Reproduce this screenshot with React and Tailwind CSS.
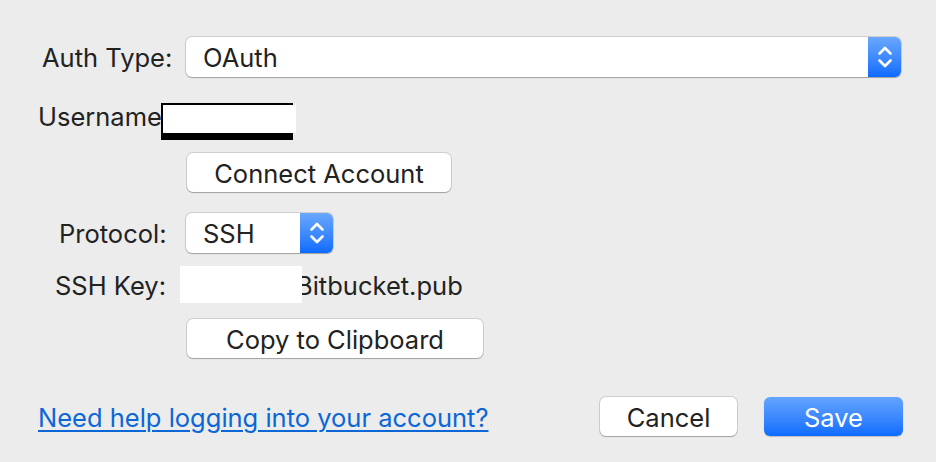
import React from "react";

const font = { fontFamily: "Inter, 'Liberation Sans', sans-serif" };

function Stepper() {
  return (
    <div className="w-[33px] h-full rounded-r-[6px] bg-gradient-to-b from-[#69a7fc] to-[#0a6bff] flex items-center justify-center">
      <svg width="18" height="26" viewBox="0 0 18 26" fill="none" stroke="white" strokeWidth="2.6" strokeLinecap="round" strokeLinejoin="round">
        <path d="M3.5 9.5 L9 4 L14.5 9.5" />
        <path d="M3.5 16.5 L9 22 L14.5 16.5" />
      </svg>
    </div>
  );
}

function Select({ value, width }) {
  return (
    <div
      className={`flex h-[40px] rounded-[6px] bg-white shadow-[0_0_0_1px_rgba(0,0,0,0.12),0_1px_1px_rgba(0,0,0,0.22)] ${width}`}
    >
      <div className="flex-1 flex items-center pl-[17px] pt-[3px] text-[25.5px] text-[#222]">{value}</div>
      <Stepper />
    </div>
  );
}

function Button({ children, className = "" }) {
  return (
    <div
      className={`h-[39px] rounded-[6px] bg-white shadow-[0_0_0_1px_rgba(0,0,0,0.12),0_1px_1px_rgba(0,0,0,0.22)] flex items-center justify-center pt-[3px] text-[25.5px] text-[#222] ${className}`}
    >
      {children}
    </div>
  );
}

export default function App() {
  return (
    <div className="w-[936px] h-[462px] bg-[#ececec] overflow-hidden text-[#222] text-[25.5px]" style={font}>
      {/* Row 1 */}
      <div className="flex items-center h-[40px] mt-[37px]">
        <div className="ml-[42px] w-[144px] pt-[3px]">Auth Type:</div>
        <Select value="OAuth" width="w-[715px]" />
      </div>
      {/* Row 2 */}
      <div className="flex items-center h-[37px] mt-[26px]">
        <div className="ml-[38px] w-[123px] -mt-[8px]">Username</div>
        <div className="flex">
          <div className="w-[132px] h-[37px] bg-black pl-[2px] pt-[2px] pb-[7px]">
            <div className="w-[133px] h-full bg-white"></div>
          </div>
        </div>
      </div>
      {/* Row 3 */}
      <div className="flex items-center h-[39px] mt-[13px]">
        <Button className="ml-[187px] w-[264px]">Connect Account</Button>
      </div>
      {/* Row 4 */}
      <div className="flex items-center h-[39px] mt-[21px]">
        <div className="ml-[59px] w-[127px] pt-[3px]">Protocol:</div>
        <Select value="SSH" width="w-[147px]" />
      </div>
      {/* Row 5 */}
      <div className="flex items-center h-[37px] mt-[14px]">
        <div className="ml-[55px] w-[125px] pt-[3px]">SSH Key:</div>
        <div className="relative z-10 w-[122px] h-[37px] bg-white"></div>
        <div className="-ml-[6px] pt-[3px]">Bitbucket.pub</div>
      </div>
      {/* Row 6 */}
      <div className="flex items-center h-[39px] mt-[16px]">
        <Button className="ml-[187px] w-[296px]">Copy to Clipboard</Button>
      </div>
      {/* Footer */}
      <div className="flex items-center h-[39px] mt-[39px] pl-[38px] pr-[33px]">
        <div className="pt-[3px] text-[#0b66d6] underline underline-offset-[3px] decoration-[2px]">
          Need help logging into your account?
        </div>
        <div className="flex-1"></div>
        <Button className="w-[137px]">Cancel</Button>
        <div className="ml-[27px] w-[139px] h-[39px] pt-[3px] rounded-[6px] bg-gradient-to-b from-[#64a4fc] to-[#0a6bff] shadow-[0_1px_1px_rgba(0,0,0,0.2)] flex items-center justify-center text-white">
          Save
        </div>
      </div>
    </div>
  );
}
